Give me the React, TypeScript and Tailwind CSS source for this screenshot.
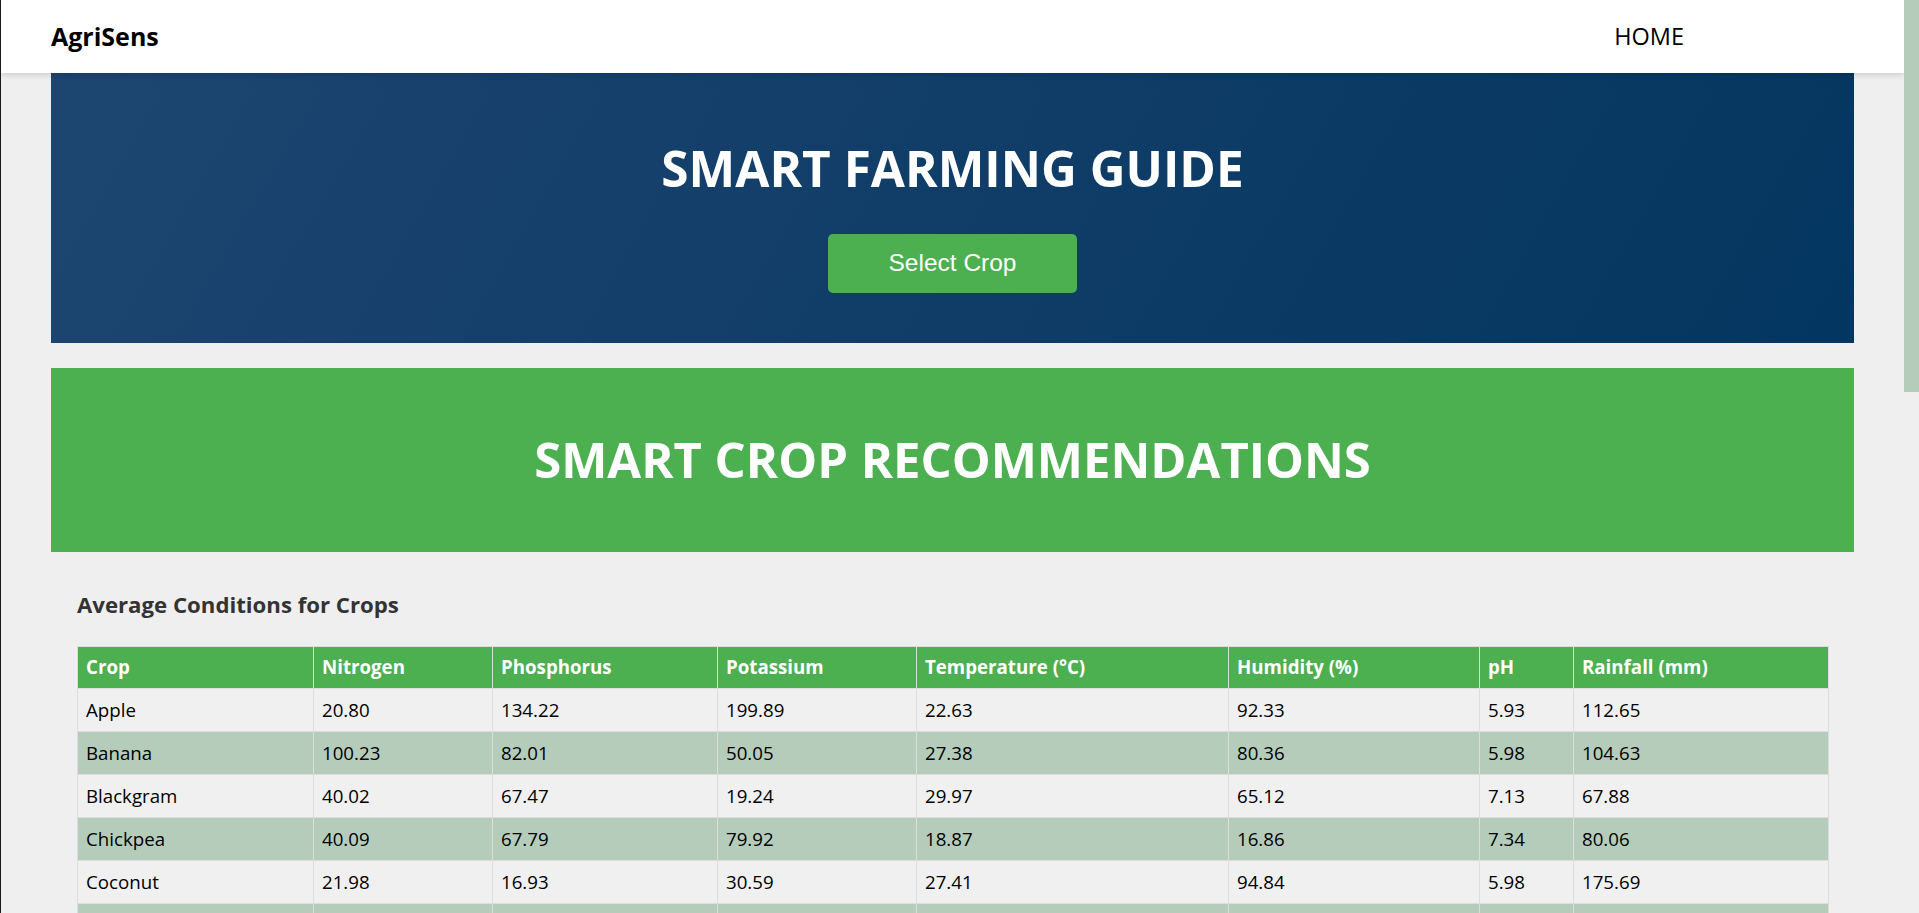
const crops = [
  ['Apple', '20.80', '134.22', '199.89', '22.63', '92.33', '5.93', '112.65'],
  ['Banana', '100.23', '82.01', '50.05', '27.38', '80.36', '5.98', '104.63'],
  ['Blackgram', '40.02', '67.47', '19.24', '29.97', '65.12', '7.13', '67.88'],
  ['Chickpea', '40.09', '67.79', '79.92', '18.87', '16.86', '7.34', '80.06'],
  ['Coconut', '21.98', '16.93', '30.59', '27.41', '94.84', '5.98', '175.69'],
  ['Coffee', '101.20', '28.74', '29.94', '25.54', '58.87', '6.79', '158.07'],
  ['Cotton', '117.77', '46.24', '19.56', '23.99', '79.84', '6.91', '80.40'],
  ['Grapes', '23.18', '132.53', '200.11', '23.85', '81.88', '6.03', '69.61'],
];

const columns = [
  { label: 'Crop', w: 'w-[236px]' },
  { label: 'Nitrogen', w: 'w-[179px]' },
  { label: 'Phosphorus', w: 'w-[225px]' },
  { label: 'Potassium', w: 'w-[199px]' },
  { label: 'Temperature (°C)', w: 'w-[312px]' },
  { label: 'Humidity (%)', w: 'w-[251px]' },
  { label: 'pH', w: 'w-[94px]' },
  { label: 'Rainfall (mm)', w: 'w-[255px]' },
];

export default function App() {
  return (
    <div className="flex h-[913px] overflow-hidden bg-[#efefef] border-l border-[#1a1a1a] font-['Open_Sans',sans-serif]">
      <div className="flex-1 min-w-0 overflow-hidden">
        {/* Navbar */}
        <nav className="relative z-10 h-[73px] bg-white shadow-[0_2px_6px_rgba(0,0,0,0.15)] flex items-center justify-between pl-[50px] pr-[220px]">
          <span className="text-[25px] font-bold text-black">AgriSens</span>
          <a href="#" className="text-[23.5px] text-black">HOME</a>
        </nav>

        <main className="px-[50px]">
          {/* Hero */}
          <section className="h-[270px] bg-[linear-gradient(120deg,#1d4570,#033660)] flex flex-col items-center pt-[67px]">
            <h1 className="text-[49.5px] leading-[56px] font-bold text-white">SMART FARMING GUIDE</h1>
            <button className="mt-[38px] h-[59px] w-[249px] rounded-[5px] bg-[#4caf50] text-white text-[24.5px] font-['Liberation_Sans',Arial,sans-serif]">
              Select Crop
            </button>
          </section>

          {/* Recommendations banner */}
          <section className="mt-[25px] h-[184px] bg-[#4caf50] flex items-center justify-center">
            <h2 className="text-[49px] font-bold text-white">SMART CROP RECOMMENDATIONS</h2>
          </section>

          {/* Averages table */}
          <section className="px-[26px] pt-[38px]">
            <h3 className="text-[22.2px] leading-[30px] font-bold text-[#333]">Average Conditions for Crops</h3>
            <table className="mt-[26px] w-full table-fixed border-collapse text-[18.7px] text-black">
              <thead>
                <tr className="bg-[#4caf50] text-white">
                  {columns.map((c) => (
                    <th key={c.label} className={`${c.w} border border-[#ddd] px-[8px] h-[42px] text-left font-bold`}>
                      {c.label}
                    </th>
                  ))}
                </tr>
              </thead>
              <tbody>
                {crops.map((row, i) => (
                  <tr key={row[0]} className={i % 2 === 1 ? 'bg-[#b5ccbb]' : 'bg-[#f0f0f0]'}>
                    {row.map((v, j) => (
                      <td key={j} className="border border-[#ddd] px-[8px] h-[43px]">
                        {v}
                      </td>
                    ))}
                  </tr>
                ))}
              </tbody>
            </table>
          </section>
        </main>
      </div>

      {/* Scrollbar */}
      <div className="w-[15px] shrink-0 bg-[#efefef]">
        <div className="h-[392px] bg-[#b5ccbb]" />
      </div>
    </div>
  );
}
